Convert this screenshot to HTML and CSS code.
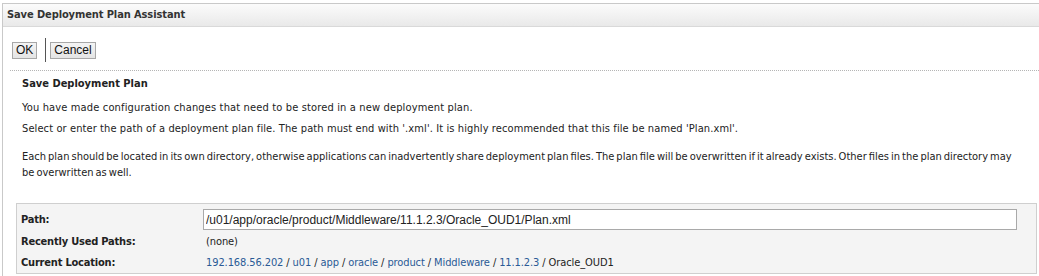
FILE: index.html
```html
<!DOCTYPE html>
<html lang="en">
<head>
    <meta charset="UTF-8">
    <title>Save Deployment Plan Assistant</title>
    <link rel="stylesheet" href="styles.css">
</head>
<body>
    <div class="panel">
        <!-- panel title bar -->
        <div class="panel-header">Save Deployment Plan Assistant</div>

        <!-- OK / Cancel -->
        <div class="toolbar">
            <button class="btn">OK</button>
            <span class="tool-sep"></span>
            <button class="btn">Cancel</button>
        </div>
        <div class="dotted-rule"></div>

        <div class="content">
            <h2 class="section-title">Save Deployment Plan</h2>
            <p class="p-first">You have made configuration changes that need to be stored in a new deployment plan.</p>
            <p class="p-second">Select or enter the path of a deployment plan file. The path must end with '.xml'. It is highly recommended that this file be named 'Plan.xml'.</p>
            <p class="p-third">Each plan should be located in its own directory, otherwise applications can inadvertently share deployment plan files. The plan file will be overwritten if it already exists. Other files in the plan directory may be overwritten as well.</p>

            <!-- path chooser -->
            <div class="path-box">
                <div class="path-row path-row-first">
                    <div class="label">Path:</div>
                    <input class="path-input" type="text" value="/u01/app/oracle/product/Middleware/11.1.2.3/Oracle_OUD1/Plan.xml">
                </div>
                <div class="path-row">
                    <div class="label">Recently Used Paths:</div>
                    <div class="value">(none)</div>
                </div>
                <div class="path-row path-row-last">
                    <div class="label">Current Location:</div>
                    <div class="value crumbs"><a href="#">192.168.56.202</a> / <a href="#">u01</a> / <a href="#">app</a> / <a href="#">oracle</a> / <a href="#">product</a> / <a href="#">Middleware</a> / <a href="#">11.1.2.3</a> / Oracle_OUD1</div>
                </div>
            </div>
        </div>
    </div>
</body>
</html>
```

FILE: styles.css
```css
body {
    margin: 0;
    background-color: #fff;
    font-family: Tahoma, "DejaVu Sans Condensed", "DejaVu Sans", sans-serif;
    font-size: 11px;
    color: #222;
    overflow: hidden;
}

/* outer panel, only left and top edges visible */
.panel {
    margin: 3px 0 0 2px;
    border-left: 1px solid #c9c9c9;
    border-top: 1px solid #c9c9c9;
    height: calc(100vh - 4px);
}

.panel-header {
    height: 22px;
    line-height: 21px;
    padding-left: 4px;
    font-weight: bold;
    letter-spacing: -0.1px;
    color: #333;
    background: linear-gradient(#fbfbfb, #e9e9e9);
    border-bottom: 1px solid #d9d9d9;
}

.toolbar {
    display: flex;
    align-items: center;
    height: 24px;
    padding: 11px 0 0 9px;
}

.btn {
    font-family: "Liberation Sans", Arial, sans-serif;
    font-size: 12px;
    color: #111;
    background: linear-gradient(#f4f4f4, #e4e4e4);
    border: 1px solid #a7a7a7;
    border-radius: 0;
    height: 17px;
    padding: 0 3px;
    margin: 0;
    line-height: 15px;
}

.tool-sep {
    width: 1px;
    height: 24px;
    background: #555;
    margin: 0 4px 0 8px;
}

.dotted-rule {
    margin: 8px 0 0 7px;
    border-top: 1px dotted #b5b5b5;
}

.content {
    padding: 6px 0 0 19px;
}

.section-title {
    font-size: 11px;
    font-weight: bold;
    margin: 0 0 9px 0;
    line-height: 14px;
}

p {
    margin: 0;
    line-height: 16px;
    letter-spacing: 0.15px;
}

.p-first {
    margin-bottom: 5px;
}

.p-second {
    letter-spacing: 0.1px;
    margin-bottom: 12px;
}

.p-third {
    max-width: 995px;
    letter-spacing: 0;
    word-spacing: -1.1px;
    margin-bottom: 22px;
}

.path-box {
    margin-left: -6px;
    width: 1019px;
    border: 1px solid #cfcfcf;
    background: #f4f4f4;
    padding-top: 5px;
}

.path-row {
    display: flex;
    align-items: center;
    height: 22px;
}

.path-row-first {
    height: 21px;
}

.path-row-last {
    height: 21px;
}

.label {
    width: 182px;
    padding-left: 4px;
    font-weight: bold;
    letter-spacing: -0.2px;
    color: #222;
    flex-shrink: 0;
}

.value {
    padding-left: 3px;
    letter-spacing: -0.1px;
}

.path-input {
    box-sizing: border-box;
    width: 814px;
    height: 21px;
    border: 1px solid #a9a9a9;
    background: #fff;
    font-family: "Liberation Sans", Arial, sans-serif;
    font-size: 12px;
    color: #222;
    padding: 0 2px;
    margin: 0;
}

.crumbs a {
    color: #2a5a96;
    text-decoration: none;
}
```
